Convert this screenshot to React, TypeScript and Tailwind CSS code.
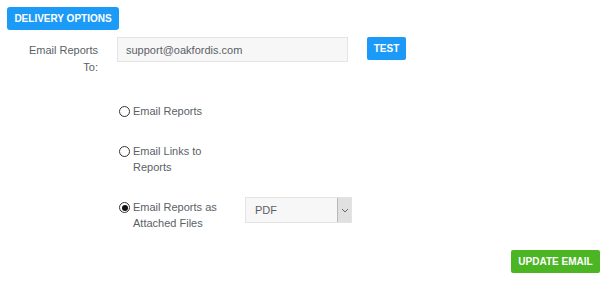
export default function App() {
  const font = { fontFamily: "'Liberation Sans', Arial, sans-serif" };
  return (
    <div className="w-[616px] h-[282px] bg-white relative text-[11px] text-[#5a5f66]" style={font}>
      <div className="pt-[7px] pl-[7px]">
        <button className="h-[23px] w-[112px] bg-[#1b9af7] text-white font-bold text-[10px] rounded-[3px] whitespace-nowrap">
          DELIVERY OPTIONS
        </button>
      </div>
      <div className="flex mt-[7px] h-[38px]">
        <div className="w-[99px] pr-[1px] text-right leading-[17px] pt-[5px] pl-[16px]">Email Reports To:</div>
        <input
          readOnly
          value="support@oakfordis.com"
          className="ml-[18px] w-[231px] h-[25px] bg-[#f7f7f7] border border-[#e4e4e4] px-[8px] text-[11px] text-[#5a5f66] outline-none"
        />
        <button className="ml-[19px] h-[23px] w-[39px] bg-[#1b9af7] text-white font-bold text-[10px] rounded-[2px]">
          TEST
        </button>
      </div>
      <div className="ml-[119px] mt-[28px] flex flex-col gap-[24px]">
        <Radio label="Email Reports" />
        <Radio label={<>Email Links to<br />Reports</>} />
        <div className="flex items-start">
          <Radio label={<>Email Reports as<br />Attached Files</>} checked />
          <div className="ml-[18px] -mt-[2px] w-[107px] h-[26px] border border-[#e4e4e4] bg-[#f7f7f7] flex items-center justify-between">
            <span className="pl-[9px]">PDF</span>
            <span className="w-[14px] h-[24px] bg-[#e0e0e0] border-l border-[#b8b8b8] flex items-center justify-center">
              <svg width="8" height="5" viewBox="0 0 8 5"><path d="M1 1l3 3 3-3" fill="none" stroke="#666" strokeWidth="1" /></svg>
            </span>
          </div>
        </div>
      </div>
      <div className="absolute right-[16px] top-[250px]">
        <button className="h-[23px] w-[89px] bg-[#4bb523] text-white font-bold text-[10px] rounded-[2px] whitespace-nowrap">
          UPDATE EMAIL
        </button>
      </div>
    </div>
  );
}

function Radio({ label, checked }: { label: React.ReactNode; checked?: boolean }) {
  return (
    <div className="flex items-start w-[108px] leading-[16px]">
      <span className="mt-[3px] w-[11px] h-[11px] rounded-full border border-[#333] flex items-center justify-center shrink-0">
        {checked && <span className="w-[6px] h-[6px] rounded-full bg-[#111]" />}
      </span>
      <span className="ml-[3px] whitespace-nowrap">{label}</span>
    </div>
  );
}
